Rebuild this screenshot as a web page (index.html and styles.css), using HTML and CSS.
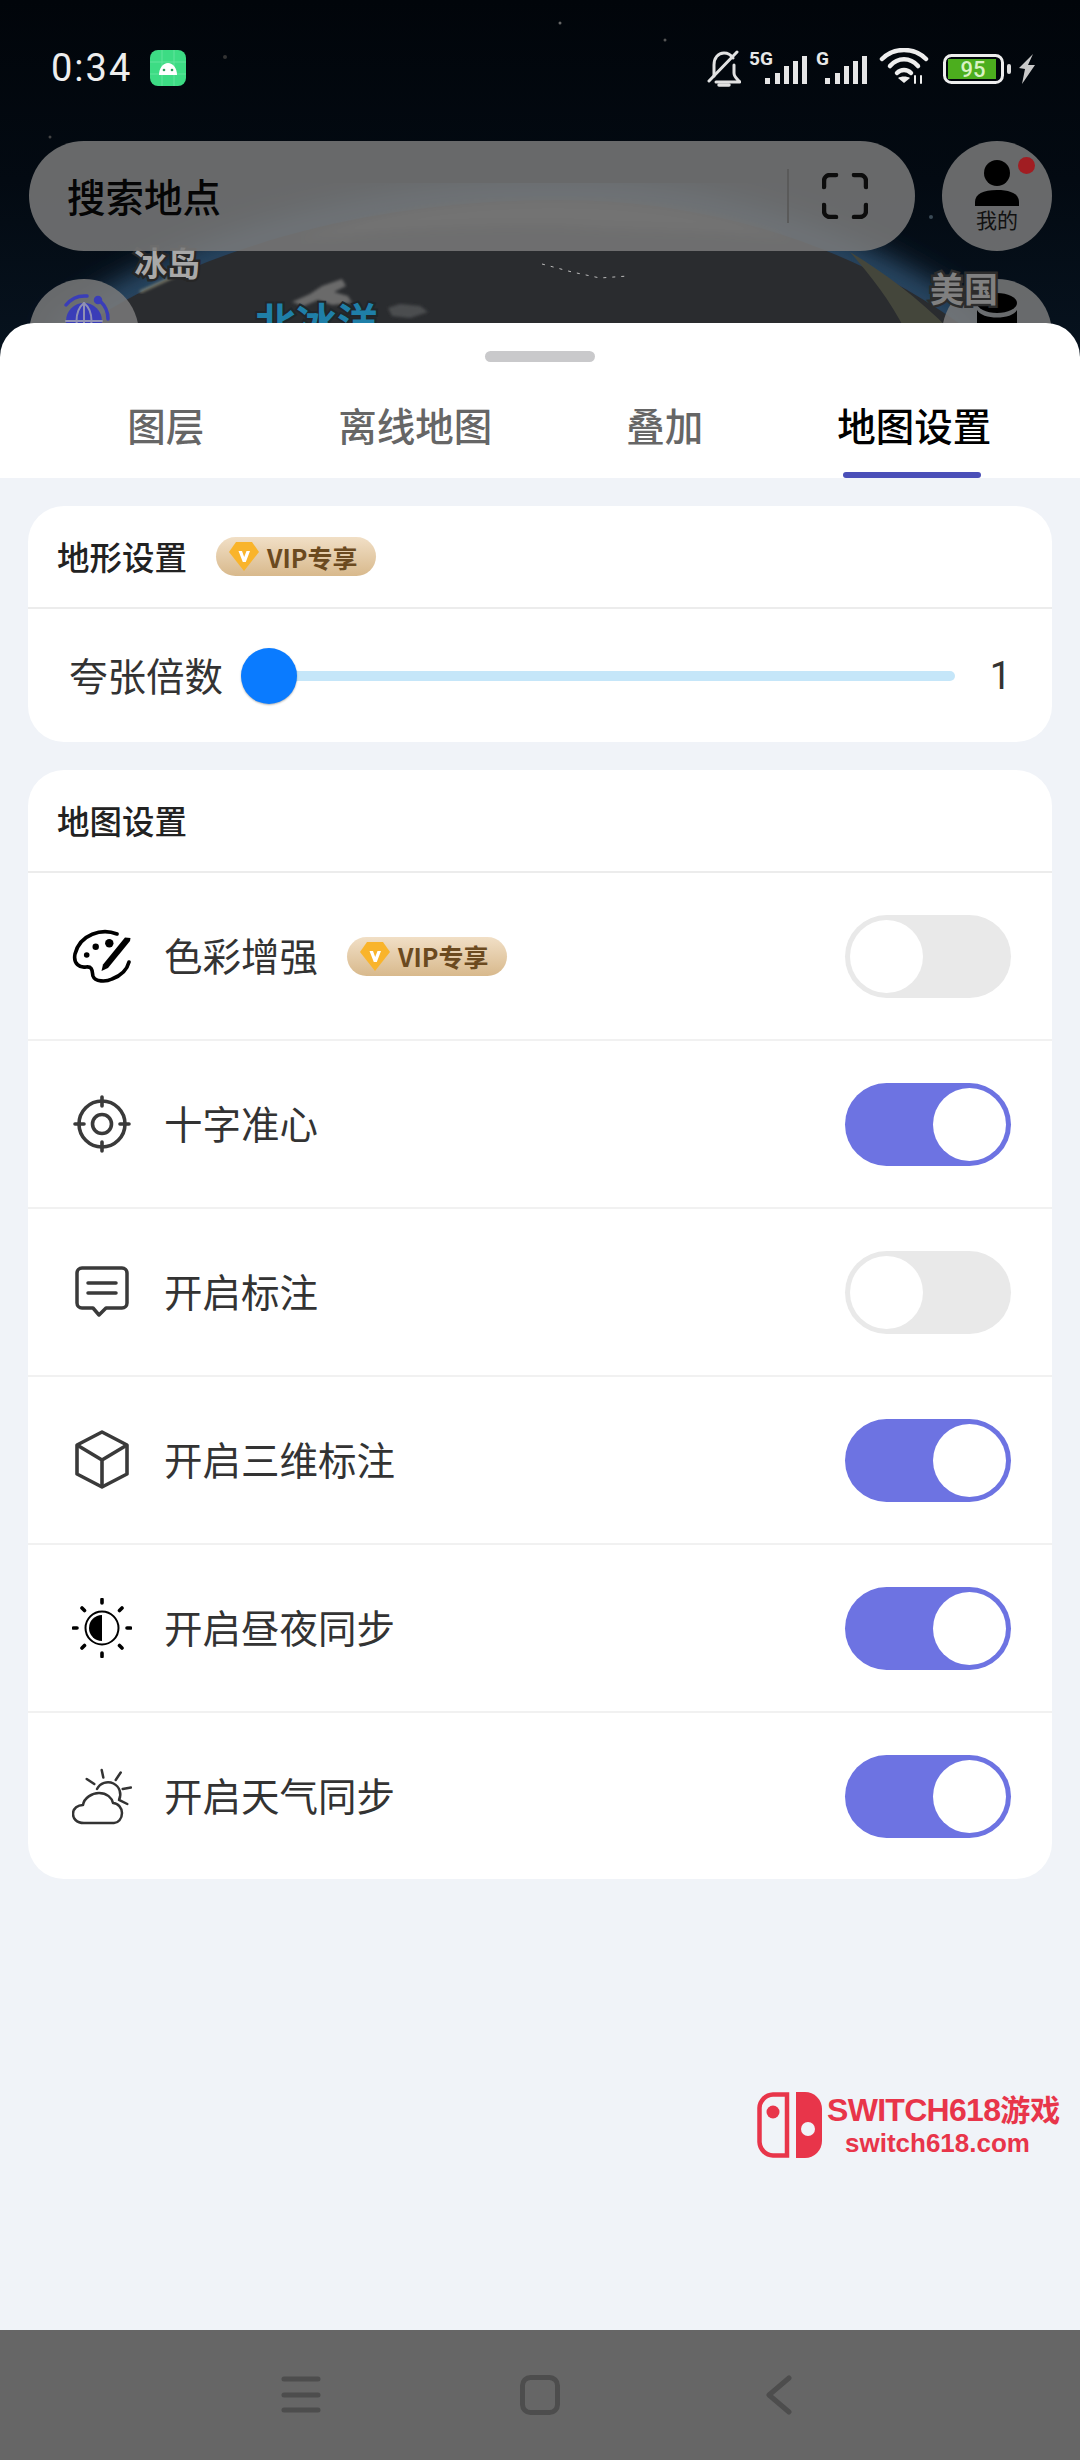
FILE: index.html
```html
<!DOCTYPE html>
<html lang="zh-CN">
<head>
    <meta charset="UTF-8">
    <meta name="viewport" content="width=device-width, initial-scale=1.0">
    <title>地图设置</title>
    <link rel="stylesheet" href="styles.css">
</head>
<body>
    <div class="map">
        <svg class="map-bg" width="1080" height="360" viewBox="0 0 1080 360">
            <defs>
                <filter id="blur18"><feGaussianBlur stdDeviation="16"/></filter>
                <filter id="blur4"><feGaussianBlur stdDeviation="5"/></filter>
                <filter id="blur1"><feGaussianBlur stdDeviation="1.500"/></filter>
            </defs>
            <path d="M60 340C190 245 380 198 560 198C710 198 860 245 985 340" fill="none" stroke="#3a6488" stroke-width="26" filter="url(#blur18)"/>
            <path d="M70 335C200 243 380 200 560 200C700 200 850 240 975 335V360H70Z" fill="#2a2c2f"/>
            <path d="M850 252C880 270 915 295 950 330L905 330C890 300 870 275 850 252Z" fill="#44463b"/>
            <path d="M300 240C380 210 470 200 560 200C640 200 720 212 790 238C700 228 640 232 560 226C470 226 380 228 300 240Z" fill="#484848" filter="url(#blur4)"/>
            <path d="M140 292L175 276" stroke="#8d8d78" stroke-width="2" filter="url(#blur1)"/>
            <path d="M292 302L310 294L322 286L342 279L346 286L334 292L348 296L352 303L332 305L318 300L304 306Z" fill="#6b6b6b" filter="url(#blur1)"/>
            <path d="M388 308L400 304L420 306L428 312L410 318L392 316Z" fill="#4c4e50" filter="url(#blur1)"/>
            <path d="M542 264L572 272L600 278L628 276" fill="none" stroke="#bbbbbb" stroke-width="1" stroke-dasharray="3 6"/>
            <circle cx="560" cy="23" r="1.500" fill="#666"/>
            <circle cx="665" cy="40" r="1.500" fill="#555"/>
            <circle cx="225" cy="57" r="2" fill="#333"/>
            <circle cx="50" cy="137" r="1.500" fill="#444"/>
            <circle cx="931" cy="217" r="2" fill="#3a4a55"/>
        </svg>
        <span class="map-label label-iceland">冰岛</span>
        <span class="map-label label-ocean">北冰洋</span>

        <div class="status-bar">
            <div class="status-left">
                <span class="time">0:34</span>
                <svg width="36" height="36" viewBox="0 0 36 36">
                    <rect width="36" height="36" rx="8" fill="#3ddc84"/>
                    <path d="M0 12H36M0 24H36M12 0V36M24 0V36" stroke="#62e49c" stroke-width="1"/>
                    <path d="M9 25C9 18 13 13 18 13C23 13 27 18 27 25Z" fill="#fff"/>
                    <circle cx="14" cy="20" r="1.300" fill="#2b9c5d"/>
                    <circle cx="22" cy="20" r="1.300" fill="#2b9c5d"/>
                </svg>
            </div>
            <div class="status-right">
                <svg class="bell" width="34" height="37" viewBox="0 0 34 37" fill="none" stroke="#e2e2e2" stroke-width="3" stroke-linecap="round" stroke-linejoin="round">
                    <path d="M7 26V15C7 8 11 3 17 3C21 3 24 5 26 8"/>
                    <path d="M27 15V23C27 27 30 29 33 32H9"/>
                    <path d="M30 2L2 31"/>
                    <path d="M12 35H22" stroke-width="3.500"/>
                </svg>
                <svg width="59" height="36" viewBox="0 -4 59 36">
                    <text x="0" y="13" class="net-type">5G</text>
                    <path d="M16 26h5v6h-5zM26 21h5v11h-5zM35 14h5v18h-5zM44 9h5v23h-5zM53 4h5v28h-5z" fill="#e6e6e6"/>
                </svg>
                <svg width="52" height="36" viewBox="0 -4 52 36">
                    <text x="0" y="13" class="net-type">G</text>
                    <path d="M9 26h5v6H9zM19 21h5v11h-5zM28 14h5v18h-5zM37 9h5v23h-5zM46 4h5v28h-5z" fill="#e6e6e6"/>
                </svg>
                <svg width="56" height="36" viewBox="0 0 56 36" fill="none" stroke="#eeeeee" stroke-width="4.500" stroke-linecap="round">
                    <path d="M6 11C18 -1 38 -1 50 11"/>
                    <path d="M14 18C22 9 34 9 42 18"/>
                    <path d="M21 25C25 21 31 21 35 25"/>
                    <path d="M28 35L22 30C25 28 31 28 34 30Z" fill="#eeeeee" stroke="none"/>
                    <path d="M39 35V28M45 35V28" stroke-width="2"/>
                </svg>
                <svg width="71" height="30" viewBox="0 0 71 30">
                    <rect x="4.500" y="1.500" width="58" height="27" rx="7" fill="none" stroke="#eeeeee" stroke-width="3"/>
                    <rect x="8" y="5" width="48" height="20" fill="#4cae1e"/>
                    <text x="33" y="23" class="battery-num">95</text>
                    <rect x="67" y="10" width="4" height="10" rx="2" fill="#dddddd"/>
                </svg>
                <svg width="17" height="30" viewBox="0 0 17 30">
                    <path d="M14 0L0 14L6 15L3 30L16 11L9 11Z" fill="#c9c9c9"/>
                </svg>
            </div>
        </div>

        <div class="search-row">
            <div class="search-bar">
                <span class="search-text">搜索地点</span>
                <span class="search-divider"></span>
                <svg width="46" height="46" viewBox="0 0 46 46" fill="none" stroke="#0c0c0c" stroke-width="4.500" stroke-linecap="round" stroke-linejoin="round">
                    <path d="M2 14V8A6 6 0 0 1 8 2H14"/>
                    <path d="M32 2H38A6 6 0 0 1 44 8V14"/>
                    <path d="M44 32V38A6 6 0 0 1 38 44H32"/>
                    <path d="M14 44H8A6 6 0 0 1 2 38V32"/>
                </svg>
            </div>
            <div class="round-btn">
                <span class="red-dot"></span>
                <svg width="44" height="46" viewBox="0 0 44 46">
                    <circle cx="22" cy="13" r="13"/>
                    <path d="M0 46V42C0 34 8 30 22 30C36 30 44 34 44 42V46Z"/>
                </svg>
                <span class="round-label">我的</span>
            </div>
        </div>

        <div class="side-row">
            <div class="round-btn">
                <svg class="side-icon" width="54" height="54" viewBox="0 0 54 54" fill="none" stroke="#3a3db8" stroke-width="3.500" stroke-linecap="round">
                    <circle cx="27" cy="30" r="18" fill="#3a3db8" stroke="none"/>
                    <path d="M9 14A24 24 0 0 1 30 5M43 10A24 24 0 0 1 51 28"/>
                    <circle cx="41" cy="9" r="2.500" fill="#3a3db8"/>
                    <path d="M27 12V48M9 30H45M27 12C17 20 17 40 27 48M27 12C37 20 37 40 27 48" stroke="#8f90b4" stroke-width="2"/>
                </svg>
            </div>
            <div class="round-btn">
                <svg class="side-icon" width="44" height="54" viewBox="0 0 44 54">
                    <ellipse cx="22" cy="12" rx="20" ry="10"/>
                    <path d="M2 19C7 29 37 29 42 19V54H2Z"/>
                </svg>
            </div>
        </div>
        <span class="map-label label-usa">美国</span>
    </div>

    <div class="sheet">
        <div class="sheet-head">
            <div class="handle"></div>
            <div class="tabs">
                <div class="tab">图层</div>
                <div class="tab">离线地图</div>
                <div class="tab">叠加</div>
                <div class="tab active">地图设置</div>
            </div>
        </div>

        <div class="sheet-body">
            <div class="card">
                <div class="card-head">
                    <span class="card-title">地形设置</span>
                    <span class="vip-badge">
                        <svg width="30" height="29" viewBox="0 0 30 29">
                            <path d="M7 0H23L30 10L15 29L0 10Z" fill="#f9b42b"/>
                            <path d="M9.500 9H13L15.200 15L17.500 9H21L16.800 20H13.800Z" fill="#fff"/>
                        </svg>
                        VIP专享
                    </span>
                </div>
                <div class="slider-row">
                    <span class="row-label">夸张倍数</span>
                    <div class="slider">
                        <div class="slider-track"></div>
                        <div class="slider-thumb"></div>
                    </div>
                    <span class="slider-value">1</span>
                </div>
            </div>

            <div class="card">
                <div class="card-head">
                    <span class="card-title">地图设置</span>
                </div>

                <div class="row">
                    <svg class="row-icon" width="60" height="60" viewBox="0 0 60 60">
                        <path d="M45 8C30 2 8 8 3 28C1 38 8 42 14 41C21 40 20 46 21 50C23 56 34 56 40 53C48 50 55 44 57 36" fill="none" stroke="#000" stroke-width="3.600" stroke-linecap="round"/>
                        <path d="M53 11.500L58.500 12L58 15L36 42L29.500 45L31 38.500Z"/>
                        <circle cx="37.300" cy="17.300" r="4.200"/>
                        <circle cx="23.700" cy="20.700" r="3.200"/>
                        <circle cx="14.700" cy="29" r="2.800"/>
                    </svg>
                    <span class="row-label">色彩增强</span>
                    <span class="vip-badge">
                        <svg width="30" height="29" viewBox="0 0 30 29">
                            <path d="M7 0H23L30 10L15 29L0 10Z" fill="#f9b42b"/>
                            <path d="M9.500 9H13L15.200 15L17.500 9H21L16.800 20H13.800Z" fill="#fff"/>
                        </svg>
                        VIP专享
                    </span>
                    <div class="toggle"><div class="knob"></div></div>
                </div>

                <div class="row">
                    <svg class="row-icon" width="60" height="60" viewBox="0 0 60 60" fill="none" stroke="#3a3a3a" stroke-width="3.600" stroke-linecap="round">
                        <circle cx="30" cy="30" r="23"/>
                        <circle cx="30" cy="30" r="9.500"/>
                        <path d="M30 3V12M30 48V57M3 30H12M48 30H57"/>
                    </svg>
                    <span class="row-label">十字准心</span>
                    <div class="toggle on"><div class="knob"></div></div>
                </div>

                <div class="row">
                    <svg class="row-icon" width="60" height="60" viewBox="0 0 60 60" fill="none" stroke="#3a3a3a" stroke-width="3.500" stroke-linecap="round" stroke-linejoin="round">
                        <path d="M10 6H50A5 5 0 0 1 55 11V41A5 5 0 0 1 50 46H34L27 53L21 46H10A5 5 0 0 1 5 41V11A5 5 0 0 1 10 6Z"/>
                        <path d="M16 21H44M16 31H44"/>
                    </svg>
                    <span class="row-label">开启标注</span>
                    <div class="toggle"><div class="knob"></div></div>
                </div>

                <div class="row">
                    <svg class="row-icon" width="60" height="60" viewBox="0 0 60 60" fill="none" stroke="#3a3a3a" stroke-width="3.600" stroke-linejoin="round">
                        <path d="M30 2L55 15V44L30 57L5 44V15Z"/>
                        <path d="M5 15L30 30L55 15M30 30V57"/>
                    </svg>
                    <span class="row-label">开启三维标注</span>
                    <div class="toggle on"><div class="knob"></div></div>
                </div>

                <div class="row">
                    <svg class="row-icon" width="60" height="60" viewBox="0 0 60 60" fill="none" stroke="#000" stroke-linecap="round">
                        <circle cx="30" cy="30" r="16.500" stroke-width="2"/>
                        <path d="M30 17A13 13 0 0 0 30 43Z" fill="#000" stroke="none"/>
                        <path d="M30 1.500V5M30 55V58.500M1.500 30H5M55 30H58.500M10 10L12.500 12.500M47.500 47.500L50 50M50 10L47.500 12.500M12.500 47.500L10 50" stroke-width="3.600"/>
                    </svg>
                    <span class="row-label">开启昼夜同步</span>
                    <div class="toggle on"><div class="knob"></div></div>
                </div>

                <div class="row">
                    <svg class="row-icon" width="60" height="60" viewBox="0 0 60 60" fill="none" stroke="#333" stroke-width="2.500" stroke-linecap="round" stroke-linejoin="round">
                        <path d="M12 57C4 57 1 52 1 48C1 42 6 39 11 39C12 32 20 27 27 27C35 27 40 32 41 37C46 37 50 42 50 47C50 53 46 57 42 57Z"/>
                        <path d="M25 23A12 12 0 1 1 47 34"/>
                        <path d="M29.700 4L31.300 11.500M48.700 6.500L43.700 14M59 21.500L50.700 23M55.300 38L48 34.300M14.700 13L22.300 18"/>
                    </svg>
                    <span class="row-label">开启天气同步</span>
                    <div class="toggle on"><div class="knob"></div></div>
                </div>
            </div>
        </div>

        <div class="watermark">
            <svg width="66" height="66" viewBox="0 0 66 66">
                <path d="M30 2.500H16A14 14 0 0 0 2.500 16V50A14 14 0 0 0 16 63.500H30Z" fill="none" stroke="#e8354a" stroke-width="4.500"/>
                <circle cx="16" cy="20" r="6.500" fill="#e8354a"/>
                <path d="M39 0H48A17 17 0 0 1 65 17V49A17 17 0 0 1 48 66H39Z" fill="#e8354a"/>
                <circle cx="51" cy="37" r="7" fill="#f0f3f8"/>
            </svg>
            <div class="wm-text">
                <div class="wm-title">SWITCH618<span class="wm-cn">游戏</span></div>
                <div class="wm-url">switch618.com</div>
            </div>
        </div>
    </div>

    <div class="nav-bar">
        <div class="nav-item">
            <svg width="40" height="40" viewBox="0 0 40 40" fill="none" stroke="#4d4d4d" stroke-width="5" stroke-linecap="round">
                <path d="M3 4H37M3 20H37M3 35H37"/>
            </svg>
        </div>
        <div class="nav-item">
            <svg width="40" height="40" viewBox="0 0 40 40" fill="none" stroke="#4d4d4d" stroke-width="5">
                <rect x="2.500" y="2.500" width="35" height="35" rx="8"/>
            </svg>
        </div>
        <div class="nav-item">
            <svg width="26" height="40" viewBox="0 0 26 40" fill="none" stroke="#4d4d4d" stroke-width="5" stroke-linecap="round" stroke-linejoin="round">
                <path d="M23 3L3 20L23 37"/>
            </svg>
        </div>
    </div>
</body>
</html>
```

FILE: styles.css
```css
* {
    box-sizing: border-box;
}

html, body {
    margin: 0;
    padding: 0;
}

body {
    width: 1080px;
    height: 2460px;
    display: flex;
    flex-direction: column;
    overflow: hidden;
    font-family: "Noto Sans CJK SC", "Noto Sans", sans-serif;
    background-color: #f0f3f8;
}

/* map behind the sheet */
.map {
    position: relative;
    height: 360px;
    flex: none;
    overflow: hidden;
    background: linear-gradient(#01050a, #030a12 50%, #07131f);
}

.map-bg {
    position: absolute;
    left: 0;
    top: 0;
}

.map-label {
    position: absolute;
    font-weight: 700;
    white-space: nowrap;
    line-height: 1;
    paint-order: stroke fill;
}

.label-iceland {
    left: 134px;
    top: 246px;
    font-size: 33px;
    color: #a8a8a8;
    -webkit-text-stroke: 5px #262626;
}

.label-ocean {
    left: 255px;
    top: 300px;
    font-size: 41px;
    color: #1f7fa8;
    -webkit-text-stroke: 4px #20262a;
}

.label-usa {
    left: 930px;
    top: 271px;
    font-size: 34px;
    color: #808080;
    -webkit-text-stroke: 5px #2c2c2c;
}

.status-bar {
    position: relative;
    height: 141px;
    padding: 0 44px 0 51px;
    display: flex;
    justify-content: space-between;
    align-items: flex-start;
    color: #eee;
}

.status-left {
    display: flex;
    align-items: center;
    gap: 18px;
    padding-top: 50px;
}

.time {
    font-family: Roboto, sans-serif;
    font-size: 38px;
    line-height: 36px;
    letter-spacing: 2px;
}

.status-right {
    display: flex;
    align-items: flex-end;
    gap: 8px;
    height: 87px;
    padding-bottom: 3px;
}

.bell {
    margin-bottom: -3px;
}

.net-type {
    font-family: Roboto, sans-serif;
    font-size: 19px;
    font-weight: 700;
    fill: #e8e8e8;
}

.battery-num {
    font-family: Roboto, sans-serif;
    font-size: 22px;
    font-weight: 500;
    fill: #d9f2c4;
    text-anchor: middle;
}

.search-row {
    position: relative;
    display: flex;
    gap: 27px;
    padding: 0 28px 0 29px;
}

.search-bar {
    flex: 1;
    height: 110px;
    padding: 0 47px 0 38px;
    display: flex;
    align-items: center;
    border-radius: 55px;
    background-color: rgba(122, 122, 122, .85);
}

.search-text {
    flex: 1;
    padding-bottom: 3px;
    font-size: 38.500px;
    font-weight: 500;
    color: #050505;
}

.search-divider {
    width: 2px;
    height: 54px;
    margin-right: 33px;
    background-color: #5a5a5a;
}

.round-btn {
    position: relative;
    width: 110px;
    height: 110px;
    flex: none;
    display: flex;
    flex-direction: column;
    align-items: center;
    padding-top: 19px;
    border-radius: 50%;
    background-color: rgba(122, 122, 122, .85);
}

.red-dot {
    position: absolute;
    left: 76px;
    top: 16px;
    width: 17px;
    height: 17px;
    border-radius: 50%;
    background-color: #a11d22;
}

.round-label {
    font-size: 21px;
    line-height: 26px;
    color: #111;
}

.side-row {
    position: relative;
    margin-top: 28px;
    padding: 0 28px 0 29px;
    display: flex;
    justify-content: space-between;
}

.side-icon {
    margin-top: -7px;
}

/* bottom sheet */
.sheet {
    position: relative;
    flex: 1;
    margin-top: -37px;
    display: flex;
    flex-direction: column;
    border-radius: 34px 34px 0 0;
    overflow: hidden;
    background-color: #fff;
}

.sheet-head {
    height: 155px;
    flex: none;
    padding-top: 28px;
}

.handle {
    width: 110px;
    height: 11px;
    margin: 0 auto;
    border-radius: 6px;
    background-color: #c9c9cb;
}

.tabs {
    display: grid;
    grid-template-columns: repeat(4, 1fr);
    padding: 0 41px;
    margin-top: 36px;
}

.tab {
    position: relative;
    height: 80px;
    text-align: center;
    font-size: 38.500px;
    line-height: 52px;
    font-weight: 500;
    color: #666;
}

.tab.active {
    color: #000;
}

.tab.active::after {
    content: "";
    position: absolute;
    left: 53px;
    bottom: 0;
    width: 138px;
    height: 6px;
    border-radius: 3px;
    background-color: #4a4fb8;
}

.sheet-body {
    flex: 1;
    display: flex;
    flex-direction: column;
    gap: 28px;
    padding: 28px;
    background-color: #f0f3f8;
}

.card {
    border-radius: 36px;
    background-color: #fff;
}

.card-head {
    height: 103px;
    padding: 0 29px;
    display: flex;
    align-items: center;
    gap: 29px;
    border-bottom: 2px solid #ececec;
}

.card-title {
    padding-bottom: 3px;
    font-size: 32.500px;
    font-weight: 500;
    color: #222;
}

.vip-badge {
    width: 160px;
    height: 39px;
    padding-left: 13px;
    display: flex;
    align-items: center;
    gap: 8px;
    border-radius: 20px;
    font-size: 25px;
    font-weight: 700;
    color: #6b4a1f;
    background: linear-gradient(#f1dfc6, #d8b98c);
}

.row-label {
    padding-bottom: 4px;
    font-size: 38.500px;
    color: #333;
    white-space: nowrap;
}

.slider-row {
    height: 133px;
    padding: 0 41px 0 41px;
    display: flex;
    align-items: center;
}

.slider {
    position: relative;
    width: 714px;
    height: 56px;
    margin-left: 18px;
    display: flex;
    align-items: center;
}

.slider-track {
    width: 100%;
    height: 10px;
    border-radius: 5px;
    background-color: #c5e6f9;
}

.slider-thumb {
    position: absolute;
    left: 0;
    top: 0;
    width: 56px;
    height: 56px;
    border-radius: 50%;
    background-color: #0a7bff;
    box-shadow: 0 1px 2px rgba(0, 0, 0, .3);
}

.slider-value {
    margin-left: auto;
    font-family: Roboto, sans-serif;
    font-size: 38px;
    color: #333;
}

.row {
    height: 168px;
    padding: 0 41px 0 44px;
    display: flex;
    align-items: center;
    border-bottom: 2px solid #f1f1f1;
}

.row:last-child {
    height: 166px;
    border-bottom: none;
}

.row-icon {
    flex: none;
    margin-right: 32px;
}

.row .vip-badge {
    margin-left: 29px;
}

.toggle {
    width: 166px;
    height: 83px;
    margin-left: auto;
    padding: 5px;
    display: flex;
    border-radius: 42px;
    background-color: #e9e9e9;
}

.toggle.on {
    justify-content: flex-end;
    background-color: #6d73e2;
}

.knob {
    width: 73px;
    height: 73px;
    border-radius: 50%;
    background-color: #fff;
}

.watermark {
    position: absolute;
    left: 757px;
    top: 1769px;
    display: flex;
    gap: 4px;
    color: #e8354a;
}

.wm-text {
    margin-top: -3px;
}

.wm-title {
    font-family: "Liberation Sans", sans-serif;
    font-size: 32px;
    font-weight: 700;
    line-height: 38px;
    letter-spacing: -0.700px;
    white-space: nowrap;
}

.wm-cn {
    font-family: "Noto Sans CJK SC", sans-serif;
    font-size: 30px;
    letter-spacing: 0;
}

.wm-url {
    margin-left: 18px;
    font-family: "Liberation Sans", sans-serif;
    font-size: 26px;
    font-weight: 700;
    line-height: 28px;
    white-space: nowrap;
}

.nav-bar {
    height: 130px;
    flex: none;
    display: flex;
    justify-content: center;
    align-items: center;
    background-color: #666;
}

.nav-item {
    width: 239px;
    display: flex;
    justify-content: center;
}
```
